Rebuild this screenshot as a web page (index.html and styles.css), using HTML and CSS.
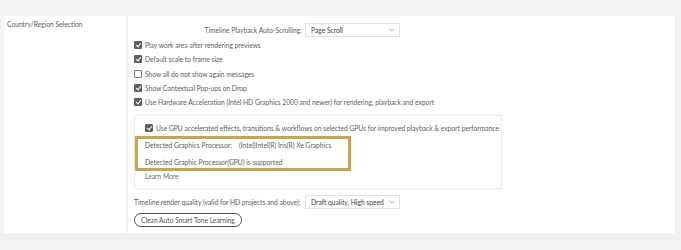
FILE: index.html
```html
<!DOCTYPE html>
<html lang="en">
<head>
  <meta charset="UTF-8">
  <title>Preferences - Playback</title>
  <link rel="stylesheet" href="styles.css">
</head>
<body>

<div class="prefs">
  <aside class="side">
    <p class="side-title">Country/Region Selection</p>
  </aside>

  <main class="panel">
    <div class="field">
      <span class="field-label right">Timeline Playback Auto-Scrolling:</span>
      <div class="dropdown">
        <span>Page Scroll</span>
        <svg width="6" height="4" viewBox="0 0 6 4"><path d="M0.5 0.8 L3 3.2 L5.5 0.8" fill="none" stroke="#999" stroke-width="0.8"/></svg>
      </div>
    </div>

    <label class="check"><span class="box on"></span>Play work area after rendering previews</label>
    <label class="check"><span class="box on"></span>Default scale to frame size</label>
    <label class="check"><span class="box"></span>Show all do not show again messages</label>
    <label class="check"><span class="box on"></span>Show Contextual Pop-ups on Drop</label>
    <label class="check"><span class="box on"></span>Use Hardware Acceleration (Intel HD Graphics 2000 and newer) for rendering, playback and export</label>

    <div class="gpu">
      <label class="check"><span class="box on"></span>Use GPU accelerated effects, transitions &amp; workflows on selected GPUs for improved playback &amp; export performance</label>
      <div class="highlight">
        <div class="info"><span class="info-key">Detected Graphics Processor:</span>(Intel)Intel(R) Iris(R) Xe Graphics</div>
        <div class="info">Detected Graphic Processor(GPU) is supported</div>
      </div>
      <div class="learn">Learn More</div>
    </div>

    <div class="field quality">
      <span class="field-label">Timeline render quality (valid for HD projects and above):</span>
      <div class="dropdown">
        <span>Draft quality, High speed</span>
        <svg width="6" height="4" viewBox="0 0 6 4"><path d="M0.5 0.8 L3 3.2 L5.5 0.8" fill="none" stroke="#999" stroke-width="0.8"/></svg>
      </div>
    </div>

    <button class="pill">Clean Auto Smart Tone Learning</button>
  </main>
</div>

</body>
</html>
```

FILE: styles.css
```css
body {
  margin: 0;
  background: #f2f2f2;
  font-family: 'Lato', sans-serif;
  font-size: 6.7px;
  color: #5e5e5e;
}

.prefs {
  display: flex;
  gap: 2px;
  margin: 16px 6px 0 4px;
  height: 217px;
}

.side {
  width: 122px;
  background: white;
}

.side-title {
  margin: 4px 0 0 3px;
  line-height: 9px;
}

.panel {
  flex: 1;
  background: white;
  padding: 7px 0 0 6px;
}

.field {
  display: flex;
  align-items: center;
  height: 14px;
}

.field-label {
  width: 168px;
  margin-right: 3px;
  white-space: nowrap;
}

.field-label.right {
  text-align: right;
}

.dropdown {
  width: 95px;
  height: 14px;
  box-sizing: border-box;
  border: 1px solid #e2e2e2;
  display: flex;
  align-items: center;
  justify-content: space-between;
  padding: 0 4px 0 5px;
  color: #444;
  white-space: nowrap;
}

.check {
  display: flex;
  align-items: center;
  height: 14.25px;
  white-space: nowrap;
}

.panel > .field + .check {
  margin-top: 1px;
}

.box {
  width: 8px;
  height: 8px;
  box-sizing: border-box;
  border: 1px solid #777;
  border-radius: 1px;
  margin-right: 3px;
  flex-shrink: 0;
  position: relative;
}

.box.on {
  background: #5f5f5f;
  border-color: #5f5f5f;
}

.box.on::after {
  content: "";
  position: absolute;
  left: 2px;
  top: 0px;
  width: 2px;
  height: 4px;
  border: solid white;
  border-width: 0 1px 1px 0;
  transform: rotate(40deg);
}

.gpu {
  margin-top: 6px;
  width: 368px;
  height: 74px;
  box-sizing: border-box;
  border: 1px solid #ececec;
  padding: 5px 0 0 10px;
}

.highlight {
  margin: 0 0 0 -10px;
  width: 216px;
  height: 35px;
  box-sizing: border-box;
  border: 3px solid #c9a550;
  padding: 1px 0 0 7px;
}

.info {
  line-height: 10px;
  white-space: nowrap;
}

.info + .info {
  margin-top: 7px;
}

.info-key {
  display: inline-block;
  width: 94px;
}

.learn {
  line-height: 10px;
  color: #6b7480;
}

.quality {
  margin-top: 6px;
}

.pill {
  margin-top: 4px;
  height: 14px;
  padding: 0 6px;
  border: 1px solid #555;
  border-radius: 7px;
  background: white;
  font-family: 'Lato', sans-serif;
  font-size: 6.7px;
  color: #555;
  line-height: 12px;
}
```
